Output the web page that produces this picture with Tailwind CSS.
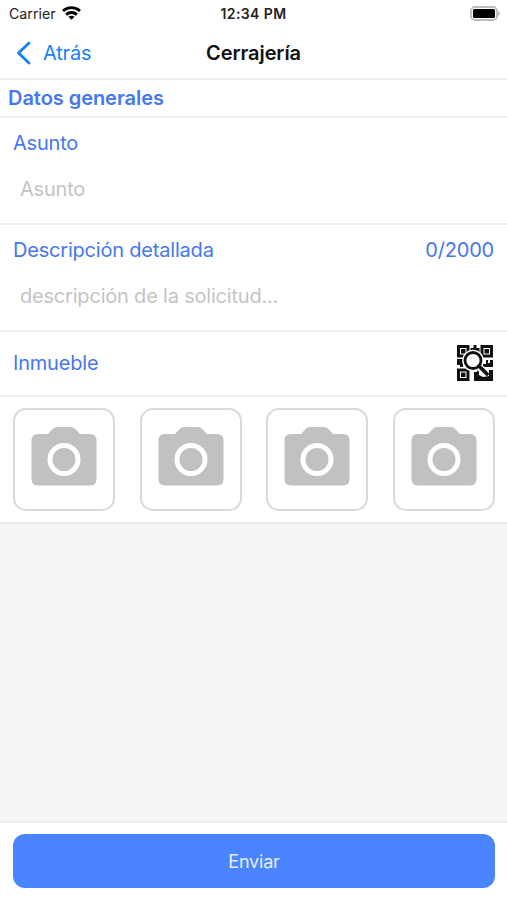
<!DOCTYPE html>
<html lang="es">

<head>
  <meta charset="UTF-8">
  <meta name="viewport" content="width=device-width, initial-scale=1.0">
  <title>Cerrajería</title>
  <script src="https://cdn.jsdelivr.net/npm/@tailwindcss/browser@4"></script>
</head>

<body class="flex h-[900px] flex-col bg-[#f4f4f4] font-['Inter','Liberation_Sans',sans-serif] text-[20px] tracking-[-0.2px] text-[#4577ee]">

  <!-- status bar -->
  <div class="grid h-[27px] grid-cols-3 items-center bg-white text-[14px] leading-none text-[#222]">
    <div class="flex items-center gap-[6px] pl-[9px]">
      <span class="pt-px text-[14.2px] tracking-normal">Carrier</span>
      <svg class="h-[14px] w-[19px]" viewBox="0 0 19 14" fill="none" stroke="#000" stroke-width="2.8">
        <path d="M1 5C5.8.5 13.2.5 18 5" />
        <path d="M4.1 8.6c3.1-2.8 7.7-2.8 10.8 0" />
        <path d="M6.5 10.8c1.7-1.4 4.3-1.4 6 0l-3 2.9z" fill="#000" stroke="none" />
      </svg>
    </div>
    <div class="text-center text-[14px] font-semibold tracking-[0.4px]">12:34 PM</div>
    <svg class="mr-[6px] h-[15px] w-[31px] justify-self-end" viewBox="0 0 31 15">
      <rect x="1" y="1" width="26" height="13" rx="4" fill="#fff" stroke="#bdbdbd" stroke-width="1.8" />
      <rect x="3" y="3" width="22" height="9" rx="1.5" fill="#000" />
      <path d="M28 5.2c2.6.8 2.6 3.8 0 4.6z" fill="#bdbdbd" />
    </svg>
  </div>

  <!-- nav bar -->
  <header class="grid h-[53px] grid-cols-3 items-center border-b-2 border-[#efefef] bg-white">
    <a href="#" class="flex items-center gap-[11px] pl-[16px] text-[#1581f5]">
      <svg class="h-[24px] w-[16px]" viewBox="0 0 16 24" fill="none" stroke="currentColor" stroke-width="2.8" stroke-linecap="round" stroke-linejoin="round">
        <path d="M13 2 2.5 12 13 22" />
      </svg>
      <span>Atrás</span>
    </a>
    <h1 class="text-center font-semibold tracking-[-0.1px] text-[#111]">Cerrajería</h1>
  </header>

  <h2 class="flex h-[38px] items-center border-b-2 border-[#f2f2f2] bg-white pl-[8px] font-semibold tracking-[-0.05px]">
    <span>Datos generales</span>
  </h2>

  <section class="h-[107px] border-b-2 border-[#eeeeee] bg-white px-[13px] pt-[10px] leading-[30px]">
    <div>Asunto</div>
    <div class="pt-[16px] pl-[7px] text-[#c4c4c4]">Asunto</div>
  </section>

  <section class="h-[107px] border-b-2 border-[#eeeeee] bg-white px-[13px] pt-[10px] leading-[30px]">
    <div class="flex justify-between">
      <span>Descripción detallada</span>
      <span>0/2000</span>
    </div>
    <div class="pt-[16px] pl-[7px] text-[#c4c4c4]">descripción de la solicitud...</div>
  </section>

  <section class="flex h-[65px] items-center justify-between border-b-2 border-[#eeeeee] bg-white px-[13px] pb-[2px]">
    <span>Inmueble</span>
    <svg class="h-[38px] w-[38px]" viewBox="0 0 38 38">
      <g fill="none" stroke="#111" stroke-width="3">
        <path d="M2.5 2.5h9.500v9.500H2.500zM26 2.500h9.500v9.500H26zM2.500 26h9.500v9.500H2.500z" />
      </g>
      <path d="M5 5h4.500v4.500H5zM28.500 5H33v4.500h-4.500zM5 28.500h4.500V33H5zM17.500 1h3v3h3v4h-9V4h3zM1 15h6v8H4v-2H1zM27 20h3v-4h2v3h2v-3h3v7H27zM18 28h3v-2h2v5l4 2 6-1v-6h4v11H18z" fill="#111" />
      <circle cx="17" cy="16.500" r="10.800" fill="#fff" />
      <path d="m23 23 7 6" stroke="#fff" stroke-width="7" />
      <circle cx="17" cy="16.500" r="8" fill="#fff" stroke="#111" stroke-width="2.800" />
      <path d="m23 22 8 8" stroke="#111" stroke-width="3.800" stroke-linecap="round" />
    </svg>
  </section>

  <!-- photos -->
  <section class="flex h-[127px] items-start justify-between border-b-2 border-[#eaeaea] bg-white pt-[11px] pr-[12px] pl-[13px]">
    <div class="flex h-[103px] w-[102px] justify-center rounded-[13px] border-2 border-[#dadada] pt-[17px]">
      <svg class="h-[59px] w-[66px]" viewBox="0 0 66 59">
        <path d="M7 7h10l4.500-4.700Q23.500 0 26 0h14q2.500 0 4.500 2.300L49 7h10q6.500 0 6.500 6.500v38.500q0 6.500-6.500 6.500H7q-6.500 0-6.500-6.500v-38.500Q.5 7 7 7z" fill="#c1c1c1" />
        <circle cx="33" cy="32.500" r="14" fill="#c1c1c1" stroke="#fff" stroke-width="5" />
      </svg>
    </div>
    <div class="flex h-[103px] w-[102px] justify-center rounded-[13px] border-2 border-[#dadada] pt-[17px]">
      <svg class="h-[59px] w-[66px]" viewBox="0 0 66 59">
        <path d="M7 7h10l4.500-4.700Q23.500 0 26 0h14q2.500 0 4.500 2.300L49 7h10q6.500 0 6.500 6.500v38.500q0 6.500-6.500 6.500H7q-6.500 0-6.500-6.500v-38.500Q.5 7 7 7z" fill="#c1c1c1" />
        <circle cx="33" cy="32.500" r="14" fill="#c1c1c1" stroke="#fff" stroke-width="5" />
      </svg>
    </div>
    <div class="flex h-[103px] w-[102px] justify-center rounded-[13px] border-2 border-[#dadada] pt-[17px]">
      <svg class="h-[59px] w-[66px]" viewBox="0 0 66 59">
        <path d="M7 7h10l4.500-4.700Q23.500 0 26 0h14q2.500 0 4.500 2.300L49 7h10q6.500 0 6.500 6.500v38.500q0 6.500-6.500 6.500H7q-6.500 0-6.500-6.500v-38.500Q.5 7 7 7z" fill="#c1c1c1" />
        <circle cx="33" cy="32.500" r="14" fill="#c1c1c1" stroke="#fff" stroke-width="5" />
      </svg>
    </div>
    <div class="flex h-[103px] w-[102px] justify-center rounded-[13px] border-2 border-[#dadada] pt-[17px]">
      <svg class="h-[59px] w-[66px]" viewBox="0 0 66 59">
        <path d="M7 7h10l4.500-4.700Q23.500 0 26 0h14q2.500 0 4.500 2.300L49 7h10q6.500 0 6.500 6.500v38.500q0 6.500-6.500 6.500H7q-6.500 0-6.500-6.500v-38.500Q.5 7 7 7z" fill="#c1c1c1" />
        <circle cx="33" cy="32.500" r="14" fill="#c1c1c1" stroke="#fff" stroke-width="5" />
      </svg>
    </div>
  </section>

  <footer class="mt-auto h-[79px] border-t-2 border-[#eeeeee] bg-white pt-[11px] pr-[12px] pl-[13px]">
    <button class="h-[54px] w-full rounded-[12px] bg-[#4b84ff] text-[18px] text-[#e6eeff]">Enviar</button>
  </footer>

</body>

</html>
